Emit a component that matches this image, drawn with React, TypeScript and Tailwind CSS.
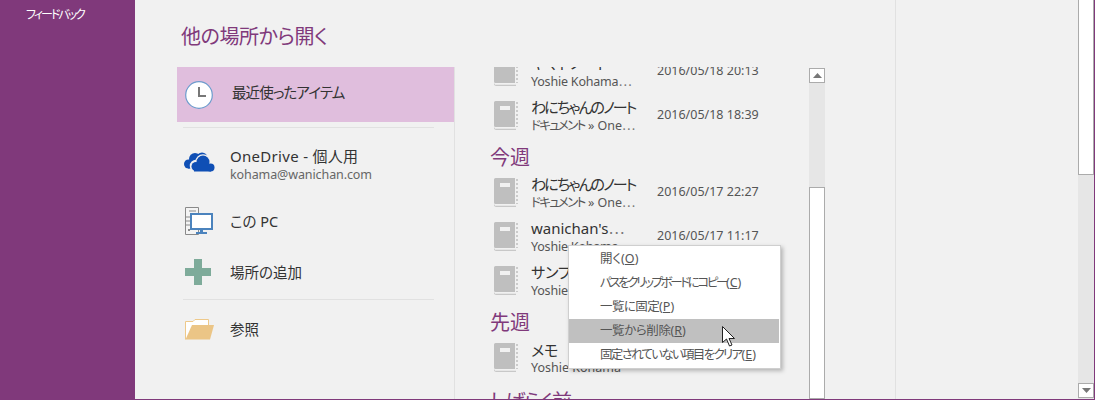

const jp = 'font-["Noto_Sans","Noto_Sans_CJK_JP",sans-serif] [font-feature-settings:"palt"]';

function Dots() {
  return <span className='font-["Noto_Sans_CJK_JP",sans-serif] tracking-[-0.5px] text-[#777]'>⋯</span>;
}

function Book() {
  return (
    <svg width="24" height="29" viewBox="0 0 24 29" className="shrink-0">
      <path d="M1.5 0H21v26H1.5A1.5 1.5 0 0 1 0 24.5V1.5A1.5 1.5 0 0 1 1.5 0Z" fill="#bfbfbf" />
      <path d="M0 26.5c0 1 .6 1.8 1.5 1.8H22" fill="none" stroke="#bfbfbf" strokeWidth="1" />
      <rect x="6" y="5" width="10" height="4" fill="#f1f1f1" />
      <path d="M23 1v25" stroke="#bfbfbf" strokeWidth="1.5" strokeDasharray="2 2" />
    </svg>
  );
}

function Row({ title, sub, date }: { title: React.ReactNode; sub: React.ReactNode; date: string }) {
  return (
    <div className="flex h-[44px] items-center">
      <div className="ml-[39px] flex w-[37px]">
        <Book />
      </div>
      <div className="w-[126px]">
        <div className="whitespace-nowrap text-[15px] leading-[20px] text-[#333]">{title}</div>
        <div className="whitespace-nowrap text-[12.5px] leading-[15px] text-[#555]">{sub}</div>
      </div>
      <div className="whitespace-nowrap text-[12.5px] text-[#555]">{date}</div>
    </div>
  );
}

function Heading({ text, cls = "" }: { text: string; cls?: string }) {
  return <div className={`ml-[35px] text-[20px] text-[#80397b] ${cls}`}>{text}</div>;
}

function Nav({ icon, cls = "", children }: { icon: React.ReactNode; cls?: string; children: React.ReactNode }) {
  return (
    <div className={`flex items-center ${cls}`}>
      <div className="ml-[8px] flex w-[45px] items-center">{icon}</div>
      {children}
    </div>
  );
}

function MenuItem({ label, k, active, cls = "" }: { label: string; k: string; active?: boolean; cls?: string }) {
  return (
    <div className={`flex h-[24px] items-center whitespace-nowrap pl-[31px] text-[12.5px] text-[#555] ${active ? "bg-[#c0c0c0] text-[#333]" : ""}`}>
      <span className={cls}>{label}</span>(<span className="underline">{k}</span>)
    </div>
  );
}

function ArrowUp() {
  return (
    <svg width="9" height="5" viewBox="0 0 9 5">
      <path d="M4.5 0 9 5H0Z" fill="#777" />
    </svg>
  );
}

const noteTitle = <span className="tracking-[-1.9px]">わにちゃんのノート</span>;
const docSub = (
  <>
    <span className="tracking-[-1.7px]">ドキュメント</span> » One<Dots />
  </>
);
const yoshieSub = (
  <span className="tracking-[-0.2px]">
    Yoshie Kohama<Dots />
  </span>
);

export default function App() {
  return (
    <div className={`flex h-[400px] w-[1095px] overflow-hidden border-r border-b border-[#80397b] bg-[#f1f1f1] ${jp}`}>
      <aside className="w-[135px] shrink-0 bg-[#80397b] pl-[26px] pt-[6px] text-[12px] leading-[18px] tracking-[-2px] text-white">
        フィードバック
      </aside>

      <main className="flex w-[761px] shrink-0 flex-col border-r border-[#e1e1e1]">
        <h1 className="ml-[46px] mt-[22px] text-[20px] leading-[29px] tracking-[-0.4px] text-[#80397b]">他の場所から開く</h1>
        <div className="ml-[42px] mt-[16px] flex min-h-0 flex-1">
          <div className="w-[278px] shrink-0 border-r border-[#e1e1e1]">
            <Nav cls="h-[55px] bg-[#e0bedd]" icon={
              <svg width="28" height="28" viewBox="0 0 28 28">
                <circle cx="14" cy="14" r="13.3" fill="#fff" stroke="#6d9ccd" strokeWidth="1.2" />
                <path d="M14 6v9h7" fill="none" stroke="#777" strokeWidth="2" />
              </svg>
            }>
              <span className="ml-[2px] -translate-y-[2px] text-[14.5px] tracking-[-0.9px] text-[#333]">最近使ったアイテム</span>
            </Nav>
            <div className="ml-[6px] mt-[5px] h-px w-[251px] bg-[#e1e1e1]" />
            <Nav cls="h-[59px] pt-[8px]" icon={
              <svg width="31" height="20" viewBox="0 0 31 20" className="-ml-[1px]">
                <g fill="#0f4fb5">
                  <circle cx="4.500" cy="12" r="4.500" />
                  <circle cx="11" cy="7" r="6" />
                  <circle cx="18" cy="6" r="5.500" />
                  <rect x="4" y="8" width="14" height="8.500" />
                </g>
                <g fill="#f1f1f1" stroke="#f1f1f1" strokeWidth="2.500">
                  <circle cx="12" cy="14" r="5" />
                  <circle cx="19" cy="10" r="6.500" />
                  <circle cx="26" cy="15" r="4.500" />
                  <rect x="8" y="14" width="18" height="5.500" />
                </g>
                <g fill="#0f4fb5">
                  <circle cx="12" cy="14.500" r="4.500" />
                  <circle cx="19" cy="10" r="6.500" />
                  <circle cx="26.500" cy="15.500" r="4" />
                  <rect x="10" y="14" width="17" height="5.500" />
                </g>
              </svg>
            }>
              <div className="translate-y-[3px]">
                <div className="text-[15px] leading-[20px] tracking-[0.3px] text-[#333]">OneDrive - 個人用</div>
                <div className="text-[12.5px] leading-[18px] tracking-[-0.1px] text-[#666]">kohama@wanichan.com</div>
              </div>
            </Nav>
            <Nav cls="h-[58px] pt-[10px]" icon={
              <svg width="28" height="28" viewBox="0 0 28 28">
                <path d="M.5.500H13.500V27.500H.5Z" fill="#f4f4f4" stroke="#8a8a8a" />
                <path d="M4 4h7M1 10h4M1 14h4M1 18h4" stroke="#8a8a8a" />
                <rect x="3" y="22" width="2" height="2" fill="#8a8a8a" />
                <rect x="6" y="7" width="21" height="15" fill="#fff" stroke="#4b83bd" strokeWidth="2" />
                <path d="M15 22h3v3h4v2H11v-2h4Z" fill="#4b83bd" />
              </svg>
            }>
              <span className="translate-y-[1px] text-[14.5px] text-[#333]">この PC</span>
            </Nav>
            <Nav cls="h-[49px] pt-[5px]" icon={
              <svg width="26" height="26" viewBox="0 0 26 26">
                <path d="M9 0h8v9h9v8h-9v9H9v-9H0V9h9Z" fill="#7eab9a" />
              </svg>
            }>
              <span className="translate-y-[1px] text-[14.5px] text-[#333]">場所の追加</span>
            </Nav>
            <div className="ml-[6px] mt-[5px] h-px w-[251px] bg-[#e1e1e1]" />
            <Nav cls="h-[58px]" icon={
              <svg width="30" height="22" viewBox="0 0 30 22">
                <path d="M.5 21.500V3.500H8L10 1.500H23.500V7" fill="#fff" stroke="#eec98a" />
                <path d="M7 7H29L25 21.500H0.500Z" fill="#ebc586" />
              </svg>
            }>
              <span className="translate-y-[1px] text-[14.5px] text-[#333]">参照</span>
            </Nav>
          </div>

          <div className="relative min-w-0 flex-1 overflow-hidden">
            <div className="-mt-[18px]">
              <Row title="ヤマトノート" sub={yoshieSub} date="2016/05/18 20:13" />
              <Row title={noteTitle} sub={docSub} date="2016/05/18 18:39" />
              <Heading text="今週" cls="mt-[9px] leading-[24px]" />
              <Row title={noteTitle} sub={docSub} date="2016/05/17 22:27" />
              <Row title={<>wanichan's<Dots /></>} sub={yoshieSub} date="2016/05/17 11:17" />
              <Row title="サンプル" sub={yoshieSub} date="" />
              <Heading text="先週" cls="mt-[8px] leading-[25px]" />
              <Row title="メモ" sub="Yoshie Kohama" date="" />
              <Heading text="しばらく前" cls="mt-[10px] leading-[26px] tracking-[-1.5px]" />
            </div>

            <div className="absolute bottom-0 left-[354px] top-px flex w-[16px] flex-col bg-[#e6e6e6]">
              <div className="flex h-[15px] items-center justify-center border border-[#ababab] bg-white">
                <ArrowUp />
              </div>
              <div className="mt-[104px] flex-1 border border-[#ababab] bg-white" />
            </div>
          </div>
        </div>
      </main>

      <div className="min-w-0 flex-1" />

      <div className="flex w-[16px] shrink-0 flex-col bg-[#e6e6e6]">
        <div className="h-[175px] border border-t-0 border-[#ababab] bg-white" />
        <div className="flex-1" />
        <div className="mb-px flex h-[15px] items-center justify-center border border-[#ababab] bg-white">
          <span className="rotate-180 leading-[0]"><ArrowUp /></span>
        </div>
      </div>

      <div className="absolute left-[568px] top-[245px] w-[213px] border border-[#cfcfcf] bg-white py-px pr-px shadow-[2px_2px_4px_rgba(0,0,0,0.25)]">
        <MenuItem label="開く" k="O" />
        <MenuItem label="パスをクリップボードにコピー" k="C" cls="tracking-[-2.4px]" />
        <MenuItem label="一覧に固定" k="P" cls="tracking-[-0.6px]" />
        <MenuItem label="一覧から削除" k="R" cls="tracking-[-0.4px]" active />
        <MenuItem label="固定されていない項目をクリア" k="E" cls="tracking-[-1.7px]" />
      </div>

      <svg className="absolute left-[722px] top-[326px]" width="14" height="21" viewBox="0 0 14 21">
        <path d="M.5.500V16.500L4.500 13 7.500 20 10 19 7 12.500H12.500Z" fill="#fff" stroke="#222" strokeWidth="1" />
      </svg>
    </div>
  );
}
